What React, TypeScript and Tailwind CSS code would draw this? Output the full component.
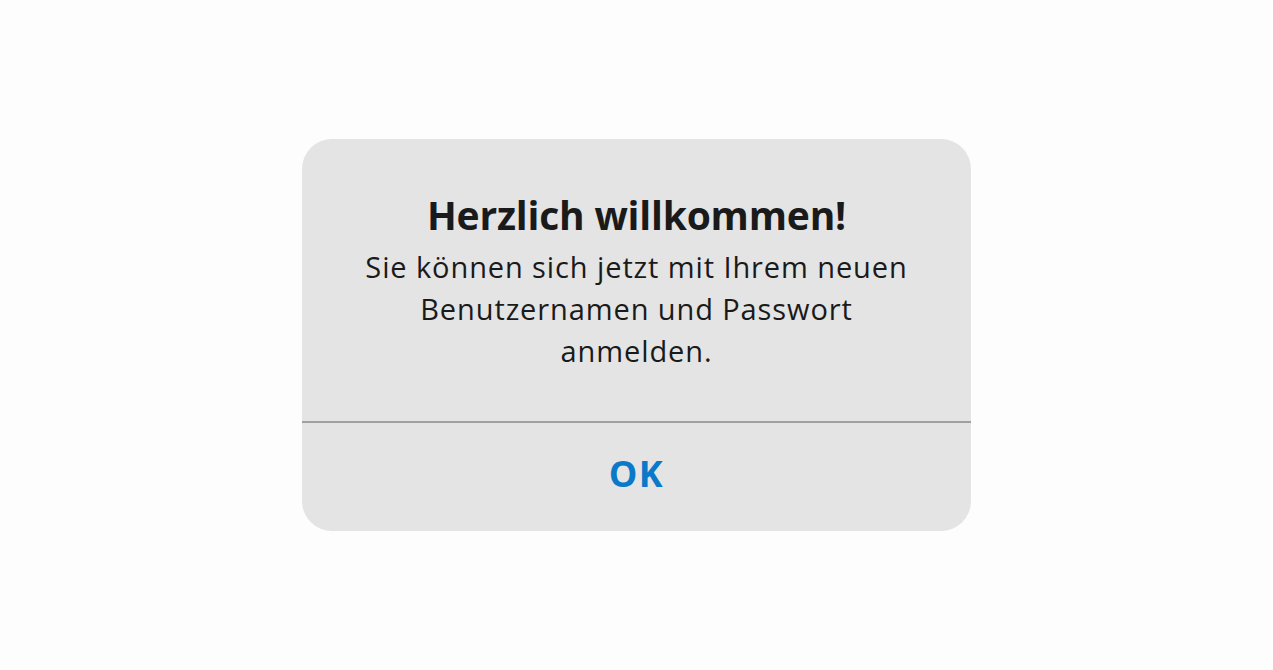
export default function App() {
  return (
    <div
      className="flex min-h-screen items-center justify-center bg-[#fdfdfd]"
      style={{ fontFamily: '"Open Sans", "Noto Sans", sans-serif' }}
    >
      <div className="flex w-[669px] flex-col overflow-hidden rounded-[30px] bg-[#e4e4e4]">
        <div className="flex h-[282px] flex-col items-center px-10 pt-[52px] text-center">
          <h1 className="text-[39px] font-bold leading-[48px] tracking-[-0.2px] text-[#1a1a1a]">
            Herzlich willkommen!
          </h1>
          <p className="mt-[7px] text-[29px] leading-[42px] tracking-[0.9px] text-[#1a1a1a]">
            Sie können sich jetzt mit Ihrem neuen
            <br />
            Benutzernamen und Passwort
            <br />
            anmelden.
          </p>
        </div>
        <div className="h-[2px] bg-[#a0a0a0]" />
        <button className="flex h-[108px] items-center justify-center pb-[6px] text-[36px] font-bold tracking-[1.5px] text-[#0b79c9]">
          OK
        </button>
      </div>
    </div>
  );
}
